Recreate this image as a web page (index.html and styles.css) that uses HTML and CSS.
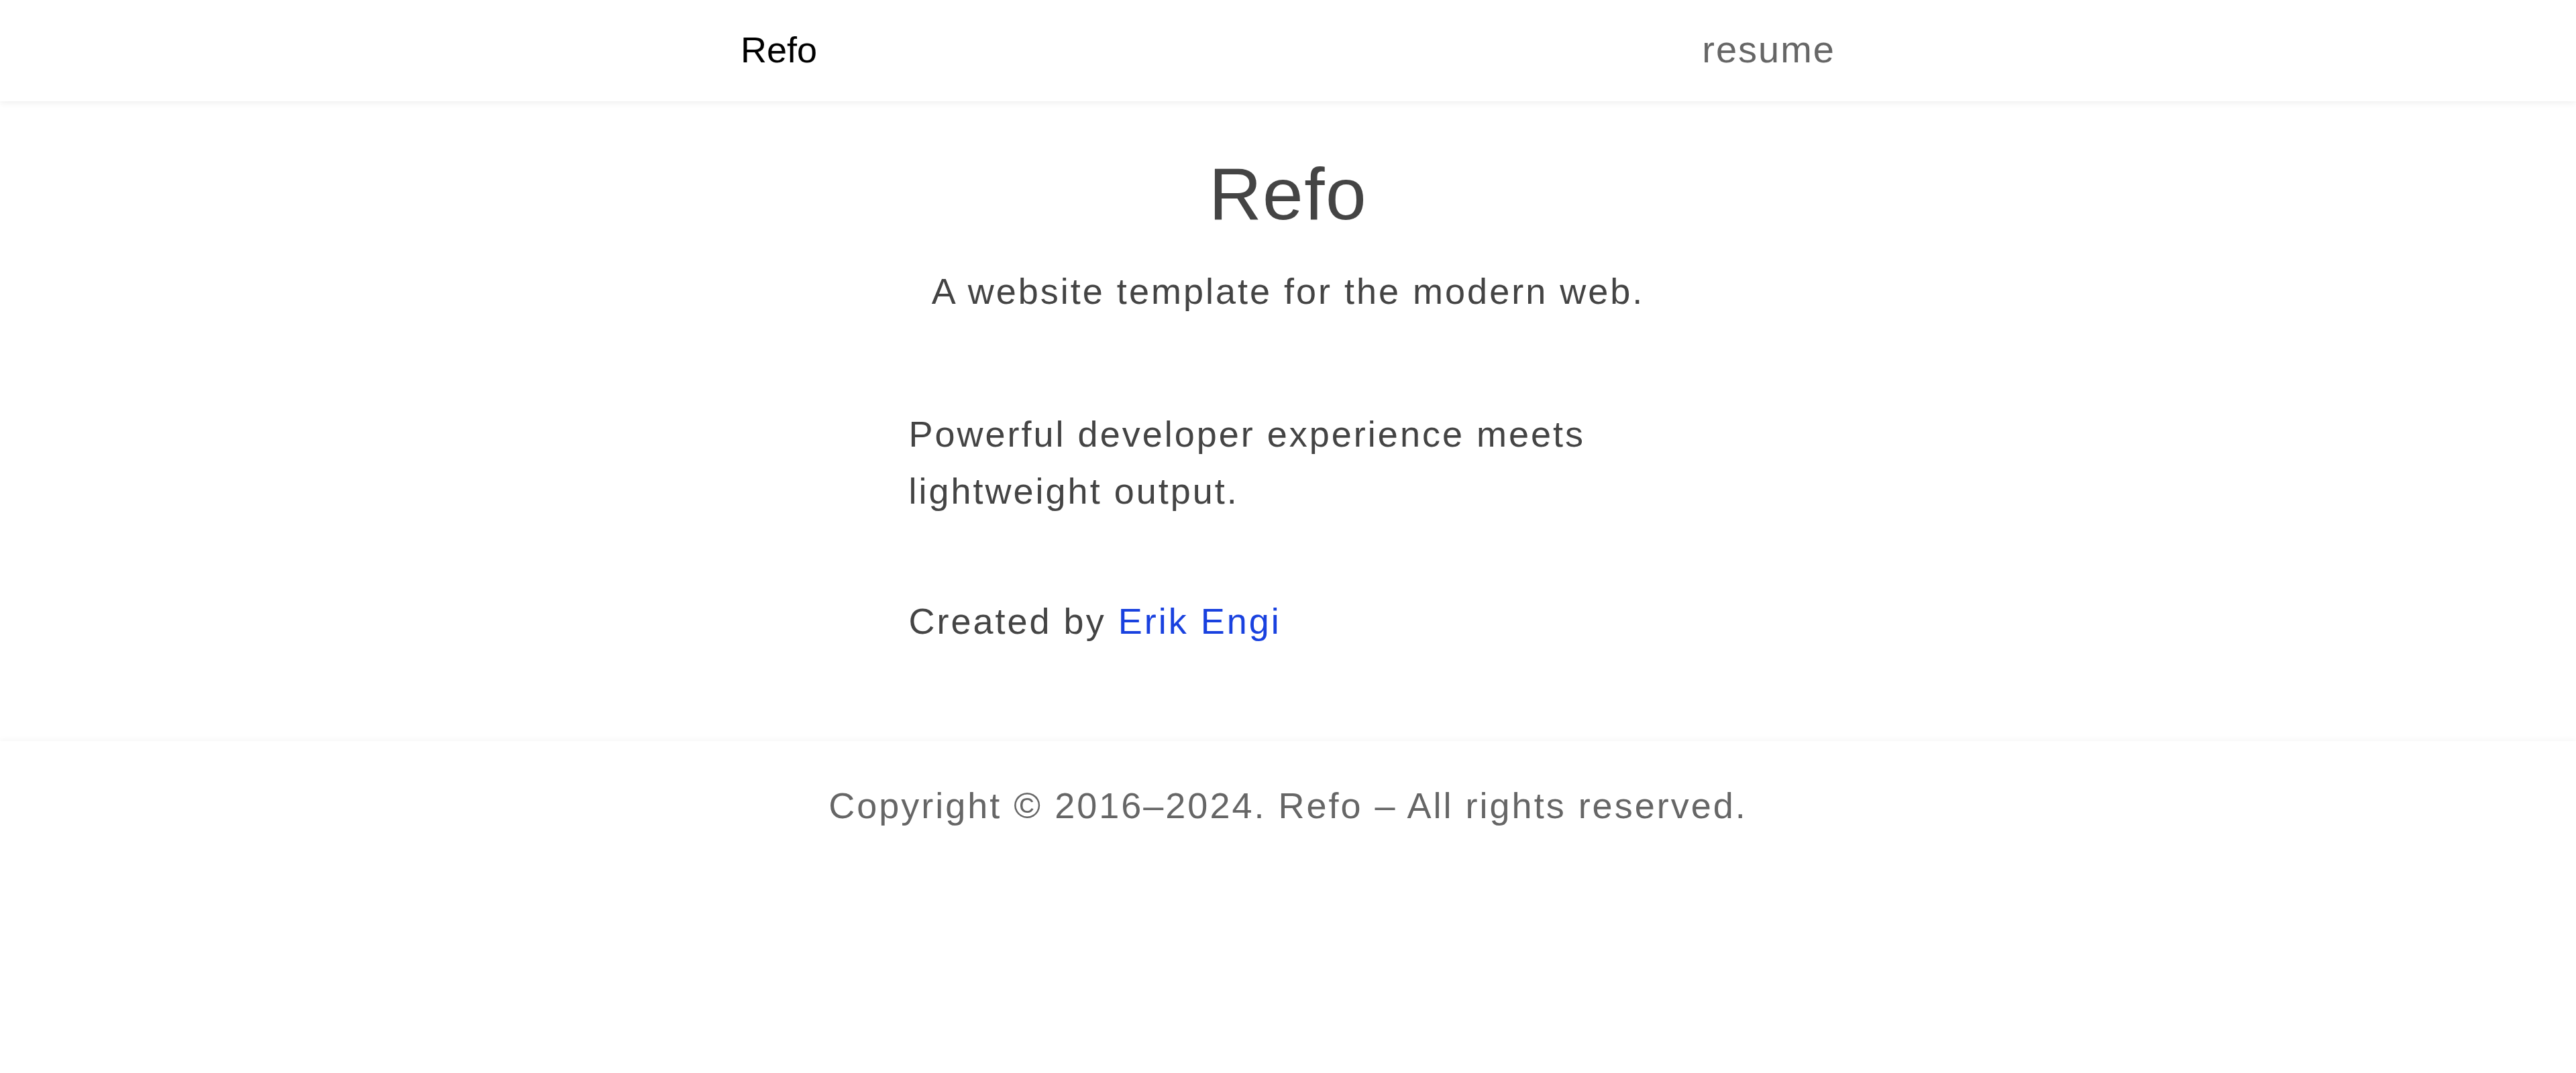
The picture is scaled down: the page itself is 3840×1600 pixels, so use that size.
FILE: index.html
```html
<!DOCTYPE html>
<html lang="en">
<head>
<meta charset="utf-8">
<title>Refo</title>
<link rel="stylesheet" href="styles.css">
</head>
<body>
<header class="site-header">
  <nav class="nav">
    <a class="nav-brand" href="#">Refo</a>
    <a class="nav-link" href="#">resume</a>
  </nav>
</header>
<main class="main">
  <h1 class="title">Refo</h1>
  <p class="subtitle">A website template for the modern web.</p>
  <section class="content">
    <p class="para">Powerful developer experience meets lightweight output.</p>
    <p class="para para-credit">Created by <a class="link" href="#">Erik Engi</a></p>
  </section>
</main>
<footer class="site-footer">
  <p class="copyright">Copyright © 2016–2024. Refo – All rights reserved.</p>
</footer>
</body>
</html>
```

FILE: styles.css
```css
html, body {
  margin: 0;
  padding: 0;
  background: #fff;
}
body {
  font-family: "Liberation Sans", Arial, sans-serif;
  font-size: 54px;
  color: #444;
}
a { text-decoration: none; }

.site-header {
  height: 151px;
  display: flex;
  align-items: center;
  box-shadow: 0 2px 10px rgba(0, 0, 0, 0.07);
  position: relative;
}
.nav {
  width: 1632px;
  margin: 0 auto;
  display: flex;
  justify-content: space-between;
  align-items: center;
  transform: translateY(-2px);
}
.nav-brand {
  color: #000;
  font-size: 54px;
}
.nav-link {
  color: #666;
  font-size: 56px;
  letter-spacing: 2px;
}

.main {
  display: flex;
  flex-direction: column;
  align-items: center;
  padding-top: 73px;
  padding-bottom: 136px;
}
.title {
  margin: 0;
  font-size: 109px;
  font-weight: normal;
  line-height: 130px;
  letter-spacing: 1.5px;
  color: #444;
}
.subtitle {
  margin: 38px 0 0;
  line-height: 85px;
  letter-spacing: 3px;
}
.content {
  width: 1131px;
  margin-top: 128px;
}
.para {
  margin: 0;
  line-height: 85px;
  letter-spacing: 3px;
}
.para-credit {
  margin-top: 109px;
}
.link {
  color: #1941df;
}

.site-footer {
  padding-top: 54px;
  padding-bottom: 2px;
  text-align: center;
  box-shadow: 0 0 10px rgba(0, 0, 0, 0.06);
}
.copyright {
  margin: 0;
  line-height: 85px;
  color: #666;
  letter-spacing: 3px;
}
```
